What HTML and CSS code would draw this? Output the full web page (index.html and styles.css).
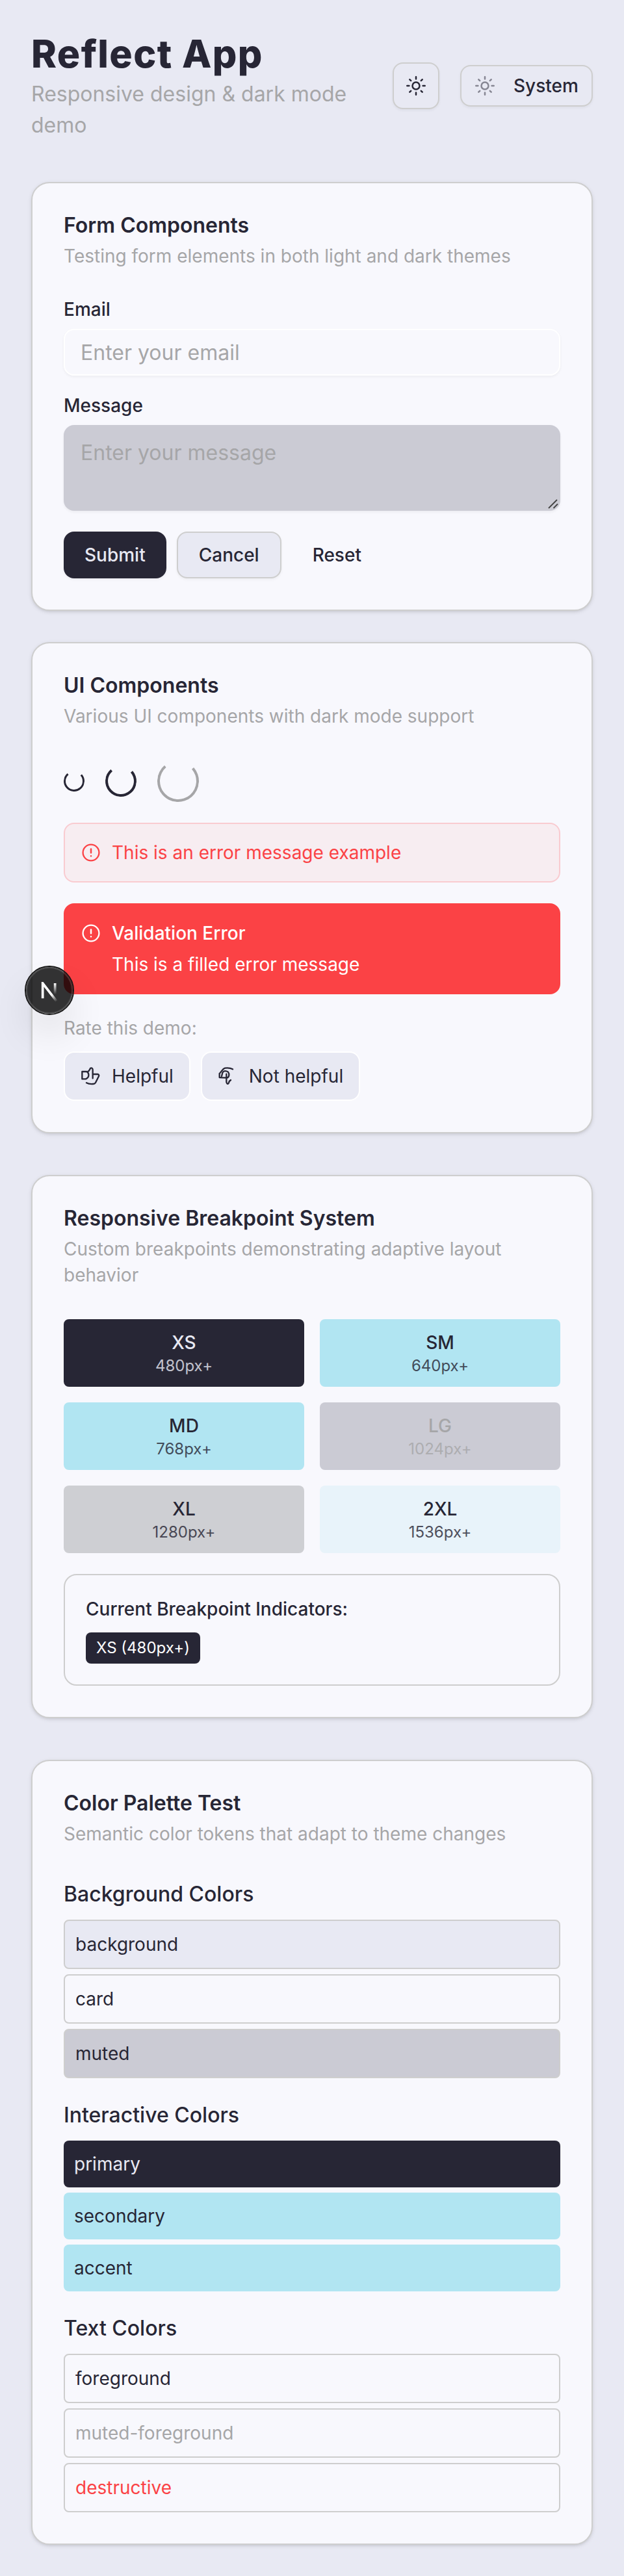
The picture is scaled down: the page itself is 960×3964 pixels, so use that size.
FILE: index.html
```html
<!DOCTYPE html>
<html lang="en">
<head>
<meta charset="utf-8">
<title>Reflect App</title>
<link rel="stylesheet" href="styles.css">
</head>
<body>
<svg class="defs" width="0" height="0">
  <symbol id="sun" viewBox="-16 -16 32 32">
    <g fill="none" stroke="currentColor" stroke-width="2.5" stroke-linecap="round">
      <circle r="5.5"/>
      <path d="M0-13.7V-10.6M0 10.6V13.7M-13.7 0H-10.6M10.6 0H13.7M-9.7-9.7-7.8-7.8M7.8 7.8 9.7 9.7M-9.7 9.7-7.8 7.8M7.8-7.8 9.7-9.7"/>
    </g>
  </symbol>
  <symbol id="alert" viewBox="-16 -16 32 32">
    <g fill="none" stroke="currentColor" stroke-width="2.3" stroke-linecap="round">
      <circle r="12.4"/>
      <path d="M0-5.6V.3M0 5.2V5.3" stroke-width="2.5"/>
    </g>
  </symbol>
</svg>
<main class="page">
  <header class="header">
    <div class="brand">
      <h1 class="brand-title">Reflect App</h1>
      <p class="brand-sub">Responsive design &amp; dark mode demo</p>
    </div>
    <div class="header-actions">
      <button class="theme-toggle"><svg class="icon"><use href="#sun"/></svg></button>
      <button class="theme-select"><svg class="icon faded"><use href="#sun"/></svg><span>System</span></button>
    </div>
  </header>

  <section class="card">
    <div class="card-head">
      <h2 class="card-title">Form Components</h2>
      <p class="card-desc">Testing form elements in both light and dark themes</p>
    </div>
    <form class="form">
      <div class="field">
        <label class="label" for="email">Email</label>
        <input class="input" id="email" type="email" placeholder="Enter your email">
      </div>
      <div class="field">
        <label class="label" for="message">Message</label>
        <div class="textarea-wrap">
          <textarea class="textarea" id="message" placeholder="Enter your message"></textarea>
          <svg class="grip" viewBox="0 0 16 16" fill="none" stroke="#444" stroke-width="1.8"><path d="M1 15 14 2M8.5 15 15 8.5"/></svg>
        </div>
      </div>
      <div class="actions">
        <button class="btn btn-primary" type="button">Submit</button>
        <button class="btn btn-outline" type="button">Cancel</button>
        <button class="btn btn-ghost" type="button">Reset</button>
      </div>
    </form>
  </section>

  <section class="card card-ui">
    <div class="card-head">
      <h2 class="card-title">UI Components</h2>
      <p class="card-desc">Various UI components with dark mode support</p>
    </div>
    <div class="stack">
      <div class="spinners">
        <span class="spinner spinner-sm"></span>
        <span class="spinner spinner-md"></span>
        <span class="spinner spinner-lg"></span>
      </div>
      <div class="alert">
        <svg class="icon alert-icon"><use href="#alert"/></svg>
        <p>This is an error message example</p>
      </div>
      <div class="alert alert-filled">
        <svg class="icon alert-icon"><use href="#alert"/></svg>
        <div class="alert-body">
          <p class="alert-title">Validation Error</p>
          <p>This is a filled error message</p>
        </div>
      </div>
      <div class="rating">
        <p class="rating-label">Rate this demo:</p>
        <div class="rating-row">
          <button class="rate">
            <svg class="icon" viewBox="0 0 96 96" fill="none" stroke="currentColor" stroke-width="7" stroke-linecap="round" stroke-linejoin="round"><path d="M7 27V61H24C34 57 38 50 37 40Q36 31 28 27ZM32 28C41 24 42 16 45 12C51 7 57 13 56 20V58M57 39H78Q87 41 84 48L69 78Q65 85 56 84Q38 85 27 79"/></svg>
            <span>Helpful</span>
          </button>
          <button class="rate">
            <svg class="icon" viewBox="0 0 96 96" fill="none" stroke="currentColor" stroke-width="7" stroke-linecap="round" stroke-linejoin="round"><path d="M8 36V54L43 56C54 52 54 37 48 29C37 21 26 24 22 32L18 48M8 36C20 24 22 14 33 11C48 9 60 11 69 16M40 38V75C43 88 50 86 53 72L60 66"/></svg>
            <span>Not helpful</span>
          </button>
        </div>
      </div>
    </div>
    <div class="dev-badge">
      <svg class="dev-logo" viewBox="0 0 15 16" fill="none" stroke-width="1.86">
        <defs>
          <linearGradient id="fade-a" x1="9" y1="10" x2="13" y2="15" gradientUnits="userSpaceOnUse"><stop stop-color="#fff"/><stop offset="1" stop-color="#fff" stop-opacity="0"/></linearGradient>
          <linearGradient id="fade-b" x1="11.8" y1="1" x2="11.8" y2="9.5" gradientUnits="userSpaceOnUse"><stop stop-color="#fff"/><stop offset="1" stop-color="#fff" stop-opacity="0"/></linearGradient>
        </defs>
        <path d="M13.3 15.2 2.34 1V12.6" stroke="url(#fade-a)"/>
        <path d="M11.825 1 11.83 9.5" stroke="url(#fade-b)"/>
      </svg>
    </div>
  </section>

  <section class="card">
    <div class="card-head">
      <h2 class="card-title">Responsive Breakpoint System</h2>
      <p class="card-desc">Custom breakpoints demonstrating adaptive layout behavior</p>
    </div>
    <div class="stack">
      <div class="tiles">
        <div class="tile tile-primary"><span>XS</span><small>480px+</small></div>
        <div class="tile tile-accent"><span>SM</span><small>640px+</small></div>
        <div class="tile tile-accent"><span>MD</span><small>768px+</small></div>
        <div class="tile tile-muted"><span>LG</span><small>1024px+</small></div>
        <div class="tile tile-border"><span>XL</span><small>1280px+</small></div>
        <div class="tile tile-pale"><span>2XL</span><small>1536px+</small></div>
      </div>
      <div class="indicator">
        <p class="indicator-title">Current Breakpoint Indicators:</p>
        <span class="indicator-badge">XS (480px+)</span>
      </div>
    </div>
  </section>

  <section class="card">
    <div class="card-head">
      <h2 class="card-title">Color Palette Test</h2>
      <p class="card-desc">Semantic color tokens that adapt to theme changes</p>
    </div>
    <div class="stack">
      <div class="palette">
        <h3 class="palette-title">Background Colors</h3>
        <div class="swatch bordered bg-page">background</div>
        <div class="swatch bordered">card</div>
        <div class="swatch bordered bg-muted">muted</div>
      </div>
      <div class="palette">
        <h3 class="palette-title">Interactive Colors</h3>
        <div class="swatch bg-primary">primary</div>
        <div class="swatch bg-accent">secondary</div>
        <div class="swatch bg-accent">accent</div>
      </div>
      <div class="palette">
        <h3 class="palette-title">Text Colors</h3>
        <div class="swatch bordered">foreground</div>
        <div class="swatch bordered text-muted">muted-foreground</div>
        <div class="swatch bordered text-destructive">destructive</div>
      </div>
    </div>
  </section>
</main>
</body>
</html>
```
FILE: styles.css
```css
:root {
  --background: #e8e9f3;
  --card: #f8f8fd;
  --foreground: #272635;
  --muted: #cbcbd4;
  --muted-foreground: #a6a6a8;
  --border: #cecece;
  --accent: #b1e5f2;
  --destructive: #fb4245;
}
* { box-sizing: border-box; margin: 0; }
body {
  background: var(--background);
  color: var(--foreground);
  font: 400 28px/40px Inter, "Liberation Sans", sans-serif;
}
button, input, textarea { font: inherit; color: inherit; letter-spacing: inherit; }
.defs { position: absolute; }
.icon { width: 32px; height: 32px; flex: none; display: block; }
.page { padding: 48px; display: flex; flex-direction: column; }

.header { display: flex; align-items: center; justify-content: space-between; height: 168px; margin-bottom: 64px; }
.brand { width: 500px; }
.brand-title { font: 800 59px/70px Inter, sans-serif; padding-bottom: 2px; letter-spacing: 1.4px; }
.brand-sub { font-size: 32px; line-height: 48px; padding-top: 1px; margin-bottom: -1px; color: var(--muted-foreground); }
.header-actions { display: flex; align-items: center; gap: 32px; }
.theme-toggle, .theme-select {
  display: flex; align-items: center; border: 2px solid var(--border); border-radius: 16px;
  background: var(--background); box-shadow: 0 2px 4px rgba(0, 0, 0, .05); font-weight: 500;
}
.theme-toggle { width: 72px; height: 72px; justify-content: center; padding: 0; }
.theme-select { width: 204px; height: 64px; padding: 0 20px; gap: 28px; }
.faded { opacity: .5; }

.card {
  position: relative; padding: 48px; background: var(--card); border: 2px solid var(--border); border-radius: 28px;
  box-shadow: 0 2px 6px rgba(0, 0, 0, .1), 0 2px 4px -2px rgba(0, 0, 0, .1);
}
.card + .card { margin-top: 64px; }
.card + .card-ui { margin-top: 48px; }
.card-head { display: flex; flex-direction: column; gap: 12px; margin-bottom: 48px; }
.card-title { font-size: 32px; line-height: 31px; padding-top: 1px; font-weight: 600; }
.card-desc { color: var(--muted-foreground); }

.form, .stack { display: flex; flex-direction: column; gap: 32px; }
.field { display: flex; flex-direction: column; gap: 16px; }
.label { line-height: 28px; font-weight: 500; }
.input, .textarea {
  display: block; width: 100%; border: 2px solid #fff; border-radius: 16px; padding: 1px 24px 0;
  font-size: 32px; background: transparent; box-shadow: 0 2px 4px rgba(0, 0, 0, .05);
}
.input { height: 72px; }
.textarea-wrap { position: relative; }
.textarea { height: 132px; padding: 17px 24px 15px; line-height: 48px; resize: none; border-color: var(--muted); background: var(--muted); }
.grip { position: absolute; right: 3px; bottom: 3px; width: 16px; height: 16px; }
.input::placeholder, .textarea::placeholder { color: var(--muted-foreground); opacity: 1; }
.actions { display: flex; gap: 16px; }
.btn { height: 72px; padding: 0 32px; border: 0; border-radius: 16px; font-weight: 500; background: none; }
.btn-primary { color: var(--background); background: var(--foreground); box-shadow: 0 2px 4px rgba(0, 0, 0, .05); }
.btn-outline { border: 2px solid var(--border); background: var(--background); box-shadow: 0 2px 4px rgba(0, 0, 0, .05); }

.spinners { display: flex; align-items: center; gap: 32px; height: 64px; }
.spinner { border: 4px solid var(--foreground); border-top-color: transparent; border-radius: 50%; transform: rotate(4deg); }
.spinner-sm { width: 32px; height: 32px; border-width: 3px; }
.spinner-md { width: 48px; height: 48px; }
.spinner-lg { width: 64px; height: 64px; border-color: var(--muted-foreground); border-top-color: transparent; }

.alert {
  display: flex; gap: 16px; padding: 24px; border: 2px solid #f9cbd0; border-radius: 16px;
  color: var(--destructive); background: #f7edf1;
}
.alert-icon { margin-top: 4px; }
.alert-filled { color: #fff; background: var(--destructive); border-color: var(--destructive); }
.alert-body { display: flex; flex-direction: column; gap: 8px; }
.alert-title { font-weight: 500; }
.rating { display: flex; flex-direction: column; gap: 16px; }
.rating-label { color: var(--muted-foreground); }
.rating-row { display: flex; gap: 16px; }
.rate {
  display: flex; align-items: center; gap: 16px; height: 76px; padding: 0 24px;
  border: 2px solid #fff; border-radius: 16px; background: var(--background);
}
.dev-badge {
  position: absolute; left: -12px; top: 496px; width: 76px; height: 76px; border-radius: 50%;
  display: flex; align-items: center; justify-content: center;
  border: 2px solid #171717; background: rgba(0, 0, 0, .8); background-clip: padding-box;
  box-shadow: inset 0 0 0 2px rgba(255, 255, 255, .14), 0 32px 64px -16px rgba(0, 0, 0, .24);
}
.dev-logo { width: 30px; height: 32px; margin-top: 5px; }

.tiles { display: grid; grid-template-columns: 1fr 1fr; gap: 24px; }
.tile { display: flex; flex-direction: column; align-items: center; padding: 16px; border-radius: 8px; font-weight: 500; }
.tile small { font-size: 24px; line-height: 32px; font-weight: 400; opacity: .8; }
.tile-primary { color: var(--background); background: var(--foreground); }
.tile-accent { background: var(--accent); }
.tile-muted { color: var(--muted-foreground); background: var(--muted); }
.tile-border { background: #cecfd3; }
.tile-pale { background: #e8f3fa; }
.indicator { border: 2px solid var(--border); border-radius: 20px; padding: 32px; display: flex; flex-direction: column; align-items: flex-start; gap: 16px; }
.indicator-title { font-weight: 500; }
.indicator-badge { padding: 8px 16px; border-radius: 8px; font-size: 24px; line-height: 32px; color: #fff; background: var(--foreground); }

.palette { display: flex; flex-direction: column; gap: 8px; }
.palette-title { font-size: 32px; line-height: 47px; padding-top: 1px; font-weight: 500; margin-bottom: 8px; }
.swatch { padding: 16px; border-radius: 8px; }
.bordered { border: 2px solid var(--border); }
.bg-page { background: var(--background); }
.bg-muted { background: var(--muted); }
.bg-primary { color: var(--background); background: var(--foreground); }
.bg-accent { background: var(--accent); }
.text-muted { color: var(--muted-foreground); }
.text-destructive { color: var(--destructive); }
```
